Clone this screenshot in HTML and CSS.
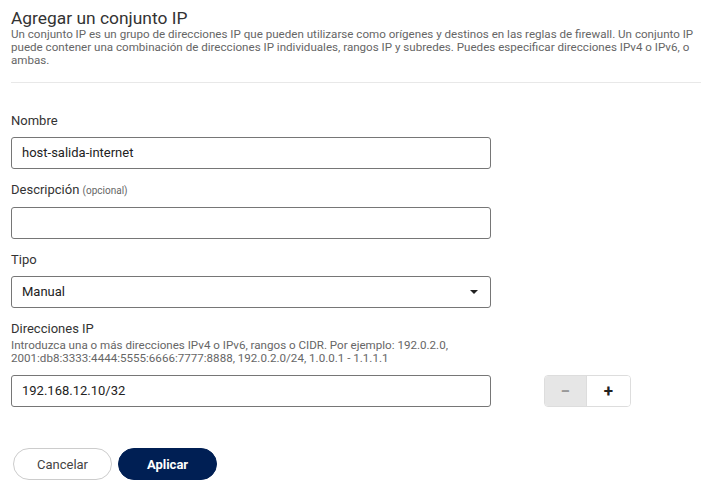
FILE: index.html
```html
<!DOCTYPE html>
<html lang="es">
<head>
<meta charset="utf-8">
<link rel="stylesheet" href="styles.css">
</head>
<body>
<div class="page">
  <header class="head">
    <h1 class="title">Agregar un conjunto IP</h1>
    <p class="desc">Un conjunto IP es un grupo de direcciones IP que pueden utilizarse como orígenes y destinos en las reglas de firewall. Un conjunto IP puede contener una combinación de direcciones IP individuales, rangos IP y subredes. Puedes especificar direcciones IPv4 o IPv6, o ambas.</p>
  </header>
  <form class="form">
    <div class="field">
      <label class="label">Nombre</label>
      <div class="input">host-salida-internet</div>
    </div>
    <div class="field">
      <label class="label">Descripción <span class="opt">(opcional)</span></label>
      <div class="input"></div>
    </div>
    <div class="field">
      <label class="label">Tipo</label>
      <div class="input select"><span>Manual</span><span class="caret"></span></div>
    </div>
    <div class="field">
      <label class="label">Direcciones IP</label>
      <p class="help">Introduzca una o más direcciones IPv4 o IPv6, rangos o CIDR. Por ejemplo: 192.0.2.0,<br>2001:db8:3333:4444:5555:6666:7777:8888, 192.0.2.0/24, 1.0.0.1 - 1.1.1.1</p>
      <div class="iprow">
        <div class="input">192.168.12.10/32</div>
        <div class="stepper">
          <span class="step minus">&minus;</span>
          <span class="step plus">+</span>
        </div>
      </div>
    </div>
    <div class="actions">
      <button type="button" class="btn cancel">Cancelar</button>
      <button type="button" class="btn apply">Aplicar</button>
    </div>
  </form>
</div>
</body>
</html>
```
FILE: styles.css
```css
* { box-sizing: border-box; }
html, body { margin: 0; padding: 0; background: #fff; }
body { font-family: Roboto, "Liberation Sans", sans-serif; color: #333; }
.page { padding: 9px 0 0 11px; }
.head { border-bottom: 1px solid #e8e8e8; padding-bottom: 15px; }
.title { margin: 0; font-size: 17.4px; font-weight: 400; line-height: 19px; color: #333; }
.desc { margin: 0; font-size: 11.6px; line-height: 13px; color: #666; }
.form { padding-top: 30px; }
.field { margin-bottom: 13px; }
.label { display: block; font-size: 13px; line-height: 16px; color: #333; margin-bottom: 8px; }
.opt { font-size: 10px; color: #666; }
.input { width: 480px; height: 32px; border: 1px solid #767676; border-radius: 3px; padding: 0 10px; font-size: 13px; line-height: 30px; color: #222; }
.select { display: flex; justify-content: space-between; align-items: center; padding-right: 12px; }
.caret { width: 0; height: 0; border-left: 4px solid transparent; border-right: 4px solid transparent; border-top: 4px solid #222; }
.help { margin: -6px 0 10px; font-size: 11.6px; line-height: 13px; color: #666; }
.iprow { display: flex; align-items: center; gap: 53px; }
.stepper { display: flex; height: 32px; border: 1px solid #ddd; border-radius: 4px; overflow: hidden; }
.step { display: flex; align-items: center; justify-content: center; font-size: 17px; font-weight: 700; }
.minus { width: 42px; background: #e6e6e6; color: #999; border-right: 1px solid #ddd; }
.plus { width: 43px; background: #fff; color: #222; }
.actions { display: flex; gap: 6px; margin-top: 41px; padding-left: 2px; }
.btn { width: 99px; height: 32px; border-radius: 16px; font-family: Roboto, "Liberation Sans", sans-serif; font-size: 13px; cursor: pointer; }
.cancel { background: #fff; border: 1px solid #ccc; color: #444; }
.apply { background: #001f54; border: 1px solid #001f54; color: #fff; font-weight: 700; }
```
